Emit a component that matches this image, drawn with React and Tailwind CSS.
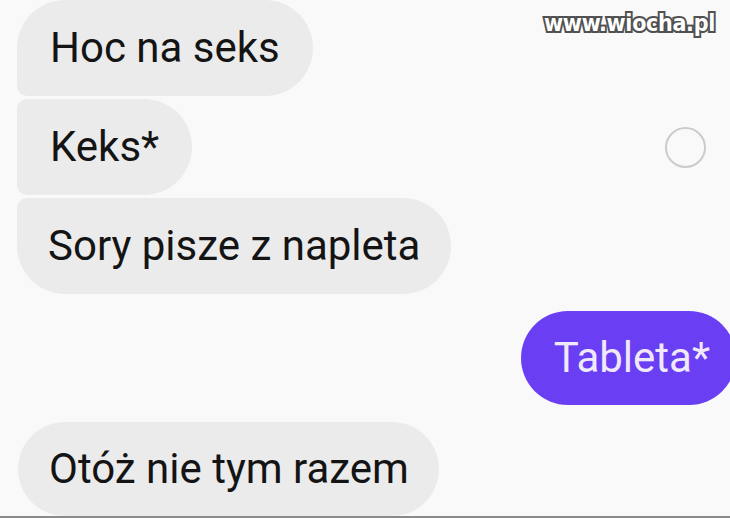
import React from "react";

const bubbleText = "text-[42px] leading-none text-[#141414]";

const App = () => {
    return (
        <div className="relative w-[730px] h-[518px] overflow-hidden bg-[#f9f9f9] font-['Roboto',sans-serif] flex flex-col">
            {/* watermark */}
            <div className="absolute top-[6px] right-[15px] text-[23px] font-bold tracking-[-0.3px] text-white font-['DejaVu_Sans_Condensed','DejaVu_Sans',sans-serif] [-webkit-text-stroke:4px_#505050] [paint-order:stroke_fill]">
                www.wiocha.pl
            </div>

            {/* received group */}
            <div className="flex flex-col gap-[3px] pl-[17px]">
                <div className="self-start h-[96px] flex items-center px-[33px] bg-[#ebebeb] rounded-[48px] rounded-bl-[10px]">
                    <span className={bubbleText}>Hoc na seks</span>
                </div>
                <div className="flex items-center justify-between pr-[24px]">
                    <div className="h-[96px] flex items-center px-[33px] bg-[#ebebeb] rounded-r-[48px] rounded-l-[10px]">
                        <span className={bubbleText}>Keks*</span>
                    </div>
                    <div className="size-[41px] rounded-full border-2 border-[#cbcbcb]" />
                </div>
                <div className="self-start h-[96px] flex items-center px-[31px] bg-[#ebebeb] rounded-[48px] rounded-tl-[10px]">
                    <span className={bubbleText}>Sory pisze z napleta</span>
                </div>
            </div>

            {/* sent */}
            <div className="flex justify-end mt-[17px] mr-[-6px]">
                <div className="h-[94px] flex items-center pl-[33px] pr-[26px] bg-[#6a3ef2] rounded-full">
                    <span className="text-[42px] leading-none text-[#efe9fb]">Tableta*</span>
                </div>
            </div>

            {/* received */}
            <div className="flex mt-[17px] pl-[18px]">
                <div className="h-[94px] flex items-center pl-[31px] pr-[30px] bg-[#ebebeb] rounded-full">
                    <span className={bubbleText}>Otóż nie tym razem</span>
                </div>
            </div>

            <div className="mt-auto h-[2px] bg-[#8a8a8a]" />
        </div>
    );
};

export default App;
